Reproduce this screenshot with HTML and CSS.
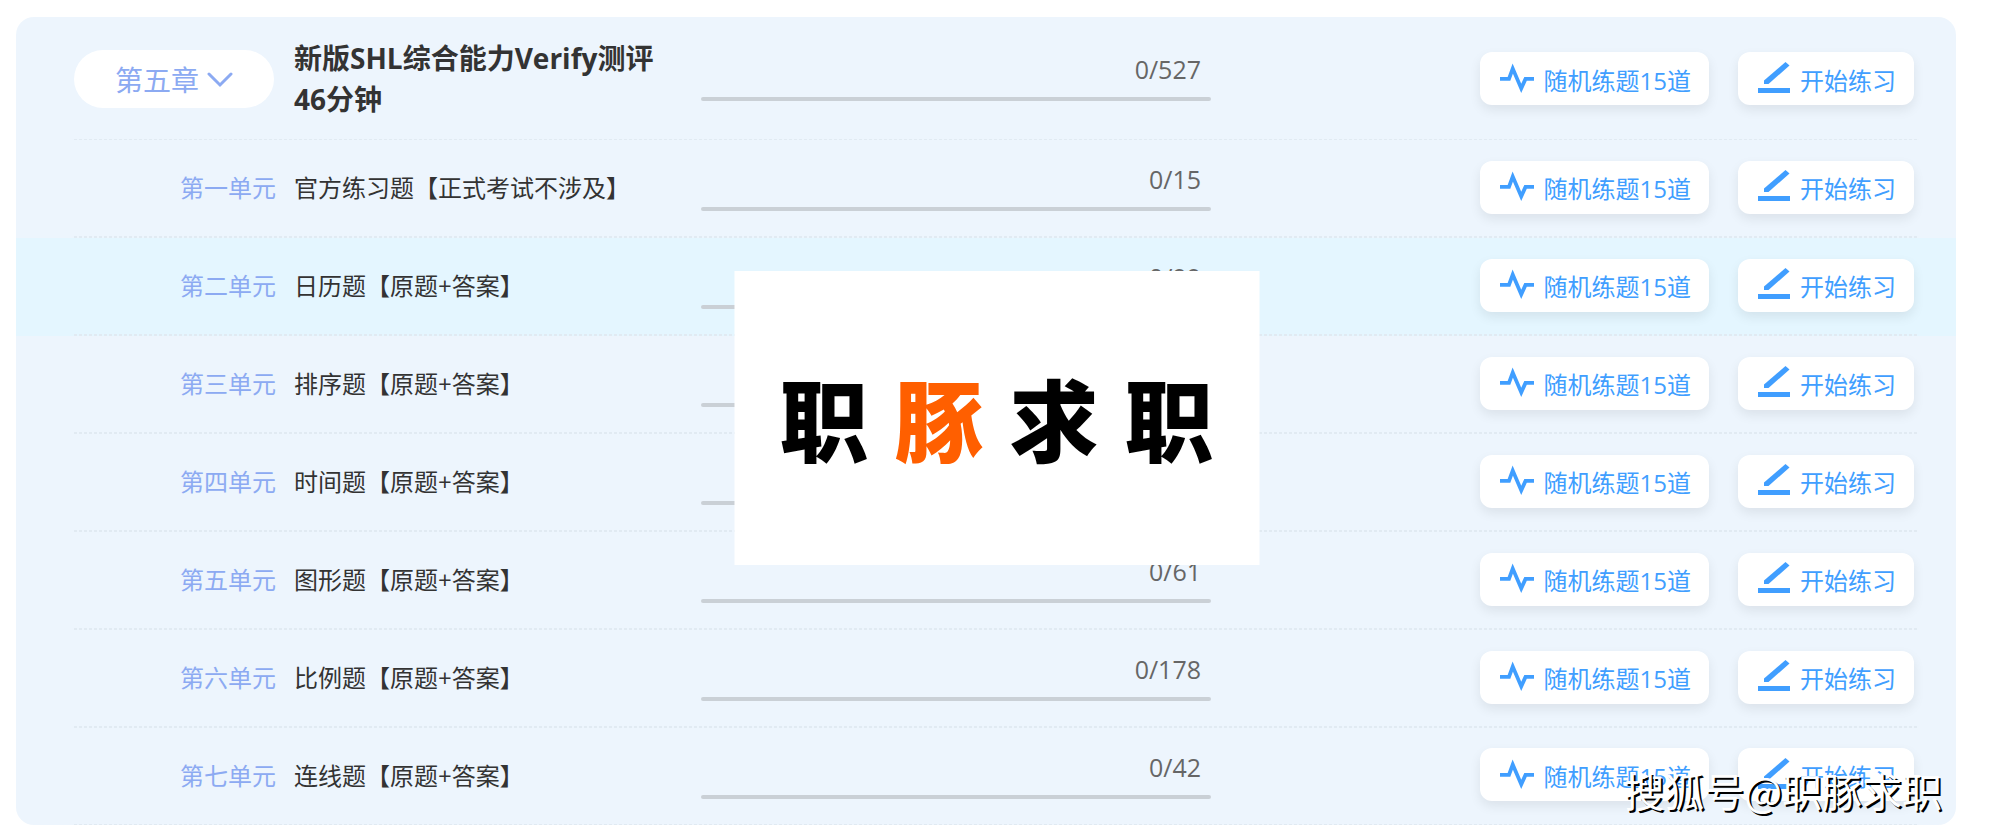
FILE: index.html
```html
<!DOCTYPE html>
<html lang="zh-CN">
<head>
    <meta charset="UTF-8">
    <meta name="viewport" content="width=device-width, initial-scale=1.0">
    <title>新版SHL综合能力Verify测评</title>
    <link rel="stylesheet" href="styles.css">
</head>
<body>
    <!-- 图标 -->
    <svg class="icon-defs" aria-hidden="true">
        <symbol id="icon-pulse" viewBox="0 0 36 32">
            <path d="M0 17H9.500L13.500 6L22.500 27L27 17H36" fill="none" stroke="currentColor" stroke-width="4"/>
        </symbol>
        <symbol id="icon-pen" viewBox="0 0 32 32">
            <path d="M6 22V18.500L27.500 0L31.500 3.500L10.500 22Z" fill="currentColor"/>
            <path d="M0 26H32V31H0Z" fill="currentColor"/>
        </symbol>
    </svg>

    <main class="panel">
        <div class="row chapter">
            <div class="row-inner">
                <div class="label"><button class="chapter-btn">第五章
                    <svg class="chevron" viewBox="0 0 26 16"><path d="M2 2L13 13L24 2" fill="none" stroke="currentColor" stroke-width="3" stroke-linecap="round"/></svg>
                </button></div>
                <h2 class="name">新版SHL综合能力Verify测评46分钟</h2>
                <div class="progress"><label class="count" for="p0">0/527</label><progress id="p0" value="0" max="527"></progress></div>
                <div class="actions">
                    <button class="btn"><svg class="icon pulse"><use href="#icon-pulse"/></svg><span>随机练题15道</span></button>
                    <button class="btn"><svg class="icon pen"><use href="#icon-pen"/></svg><span>开始练习</span></button>
                </div>
            </div>
        </div>
        <div class="row">
            <div class="row-inner">
                <div class="label">第一单元</div>
                <div class="name">官方练习题【正式考试不涉及】</div>
                <div class="progress"><label class="count" for="p1">0/15</label><progress id="p1" value="0" max="15"></progress></div>
                <div class="actions">
                    <button class="btn"><svg class="icon pulse"><use href="#icon-pulse"/></svg><span>随机练题15道</span></button>
                    <button class="btn"><svg class="icon pen"><use href="#icon-pen"/></svg><span>开始练习</span></button>
                </div>
            </div>
        </div>
        <div class="row active">
            <div class="row-inner">
                <div class="label">第二单元</div>
                <div class="name">日历题【原题+答案】</div>
                <div class="progress"><label class="count" for="p2">0/99</label><progress id="p2" value="0" max="99"></progress></div>
                <div class="actions">
                    <button class="btn"><svg class="icon pulse"><use href="#icon-pulse"/></svg><span>随机练题15道</span></button>
                    <button class="btn"><svg class="icon pen"><use href="#icon-pen"/></svg><span>开始练习</span></button>
                </div>
            </div>
        </div>
        <div class="row">
            <div class="row-inner">
                <div class="label">第三单元</div>
                <div class="name">排序题【原题+答案】</div>
                <div class="progress"><label class="count" for="p3"></label><progress id="p3" value="0" max="100"></progress></div>
                <div class="actions">
                    <button class="btn"><svg class="icon pulse"><use href="#icon-pulse"/></svg><span>随机练题15道</span></button>
                    <button class="btn"><svg class="icon pen"><use href="#icon-pen"/></svg><span>开始练习</span></button>
                </div>
            </div>
        </div>
        <div class="row">
            <div class="row-inner">
                <div class="label">第四单元</div>
                <div class="name">时间题【原题+答案】</div>
                <div class="progress"><label class="count" for="p4"></label><progress id="p4" value="0" max="100"></progress></div>
                <div class="actions">
                    <button class="btn"><svg class="icon pulse"><use href="#icon-pulse"/></svg><span>随机练题15道</span></button>
                    <button class="btn"><svg class="icon pen"><use href="#icon-pen"/></svg><span>开始练习</span></button>
                </div>
            </div>
        </div>
        <div class="row">
            <div class="row-inner">
                <div class="label">第五单元</div>
                <div class="name">图形题【原题+答案】</div>
                <div class="progress"><label class="count" for="p5">0/61</label><progress id="p5" value="0" max="61"></progress></div>
                <div class="actions">
                    <button class="btn"><svg class="icon pulse"><use href="#icon-pulse"/></svg><span>随机练题15道</span></button>
                    <button class="btn"><svg class="icon pen"><use href="#icon-pen"/></svg><span>开始练习</span></button>
                </div>
            </div>
        </div>
        <div class="row">
            <div class="row-inner">
                <div class="label">第六单元</div>
                <div class="name">比例题【原题+答案】</div>
                <div class="progress"><label class="count" for="p6">0/178</label><progress id="p6" value="0" max="178"></progress></div>
                <div class="actions">
                    <button class="btn"><svg class="icon pulse"><use href="#icon-pulse"/></svg><span>随机练题15道</span></button>
                    <button class="btn"><svg class="icon pen"><use href="#icon-pen"/></svg><span>开始练习</span></button>
                </div>
            </div>
        </div>
        <div class="row">
            <div class="row-inner">
                <div class="label">第七单元</div>
                <div class="name">连线题【原题+答案】</div>
                <div class="progress"><label class="count" for="p7">0/42</label><progress id="p7" value="0" max="42"></progress></div>
                <div class="actions">
                    <button class="btn"><svg class="icon pulse"><use href="#icon-pulse"/></svg><span>随机练题15道</span></button>
                    <button class="btn"><svg class="icon pen"><use href="#icon-pen"/></svg><span>开始练习</span></button>
                </div>
            </div>
        </div>
    </main>

    <div class="logo-box">
        <span>职</span><span class="orange">豚</span><span>求</span><span>职</span>
    </div>
    <div class="watermark">搜狐号@职豚求职</div>
</body>
</html>
```
FILE: styles.css
```css
* {
    box-sizing: border-box;
}
body {
    position: relative;
    margin: 0;
    padding: 17px 37px 11px 16px;
    background-color: #fff;
    color: #333;
    font-family: "Open Sans", "Noto Sans CJK SC", sans-serif;
    font-size: 24px;
    line-height: 32px;
}
button {
    border: none;
    background-color: #fff;
    font-family: inherit;
    font-size: inherit;
    line-height: inherit;
    cursor: pointer;
}
.icon-defs {
    position: absolute;
    width: 0;
    height: 0;
}
.panel {
    background-color: #edf5fd;
    border-radius: 18px;
    overflow: hidden;
}
.row {
    padding: 0 38px 0 58px;
}
.row.active {
    background-color: #e4f6ff;
}
/* 底部虚线用渐变绘制 */
.row-inner {
    display: grid;
    grid-template-columns: 202px 389px minmax(200px, 510px) 1fr;
    column-gap: 18px;
    align-items: center;
    min-height: 98px;
    padding-bottom: 2px;
    background: repeating-linear-gradient(90deg, #e1eaf2 0 3px, transparent 3px 5px) left bottom / 100% 2px no-repeat;
}
.chapter .row-inner {
    min-height: 123px;
    padding-bottom: 0;
    background-size: 100% 1px;
}
.row:last-child .row-inner {
    min-height: 97px;
    background-size: 100% 1px;
}
.label {
    color: #8caaf2;
    text-align: right;
}
.chapter .label {
    text-align: left;
}
.chapter-btn {
    display: flex;
    align-items: center;
    justify-content: center;
    gap: 8px;
    width: 200px;
    height: 58px;
    padding: 2px 0 0;
    border-radius: 29px;
    color: #8caaf2;
    font-size: 28px;
}
.chevron {
    width: 26px;
    height: 16px;
}
.name {
    margin: 0;
}
.chapter .name {
    font-size: 28px;
    font-weight: bold;
    line-height: 41px;
}
/* 进度条 */
.progress {
    display: flex;
    flex-direction: column;
    gap: 12px;
    padding-bottom: 2px;
}
.chapter .progress {
    padding-bottom: 4px;
}
.count {
    min-height: 32px;
    padding-right: 10px;
    color: #666;
    font-size: 25px;
    text-align: right;
}
progress {
    display: block;
    width: 100%;
    height: 4px;
    border: none;
    border-radius: 2px;
    overflow: hidden;
    appearance: none;
}
progress::-webkit-progress-bar {
    background-color: #cad0d6;
}
progress::-webkit-progress-value {
    background-color: #409eff;
}
.actions {
    display: flex;
    justify-content: flex-end;
    gap: 29px;
    padding: 0 4px 2px 0;
}
.chapter .actions {
    padding-bottom: 0;
}
.btn {
    display: flex;
    align-items: center;
    gap: 10px;
    height: 53px;
    padding: 0 18px 0 20px;
    border-radius: 12px;
    box-shadow: 0 5px 12px rgba(0, 0, 0, 0.08);
    color: #409eff;
    white-space: nowrap;
}
.btn span {
    padding-top: 4px;
}
.icon {
    height: 32px;
    margin-bottom: 2px;
}
.pulse {
    width: 34px;
}
.pen {
    width: 32px;
}
.logo-box {
    position: absolute;
    top: 50%;
    left: 50%;
    transform: translate(-50%, -50%);
    display: flex;
    align-items: center;
    justify-content: center;
    gap: 26px;
    width: 525px;
    height: 294px;
    padding-bottom: 2px;
    background-color: #fff;
    color: #000;
    font-family: "Noto Sans CJK SC", sans-serif;
    font-size: 89px;
    font-weight: 900;
    line-height: 96px;
}
.orange {
    color: #ff5f00;
}
.watermark {
    position: absolute;
    right: 51px;
    bottom: 20px;
    color: #fff;
    font-family: "Noto Sans CJK SC", sans-serif;
    font-size: 40px;
    line-height: 52px;
    text-shadow: 2px 2px 0 #000;
}
```
